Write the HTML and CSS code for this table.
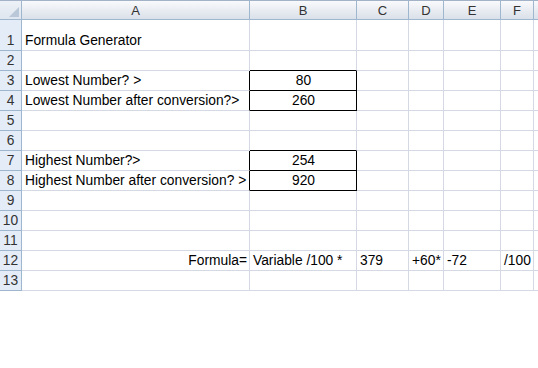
FILE: index.html
```html
<!DOCTYPE html>
<html lang="en">
<head>
<meta charset="utf-8">
<title>Formula Generator</title>
<link rel="stylesheet" href="styles.css">
</head>
<body>
<div class="sheet">
  <!-- column headings -->
  <div class="corner"><span class="corner-tri"></span></div>
  <div class="colhead">A</div>
  <div class="colhead">B</div>
  <div class="colhead">C</div>
  <div class="colhead">D</div>
  <div class="colhead">E</div>
  <div class="colhead">F</div>
  <div class="colhead blank"></div>

  <!-- row 1 -->
  <div class="rowhead">1</div>
  <div class="cell">Formula Generator</div>
  <div class="cell"></div><div class="cell"></div><div class="cell"></div><div class="cell"></div><div class="cell"></div><div class="cell"></div>

  <!-- row 2 -->
  <div class="rowhead">2</div>
  <div class="cell"></div>
  <div class="cell edge-b"></div>
  <div class="cell"></div><div class="cell"></div><div class="cell"></div><div class="cell"></div><div class="cell"></div>

  <!-- row 3 -->
  <div class="rowhead">3</div>
  <div class="cell edge-r">Lowest Number? &gt;</div>
  <div class="cell boxed">80</div>
  <div class="cell"></div><div class="cell"></div><div class="cell"></div><div class="cell"></div><div class="cell"></div>

  <!-- row 4 -->
  <div class="rowhead">4</div>
  <div class="cell edge-r">Lowest Number after conversion?&gt;</div>
  <div class="cell boxed">260</div>
  <div class="cell"></div><div class="cell"></div><div class="cell"></div><div class="cell"></div><div class="cell"></div>

  <!-- row 5 -->
  <div class="rowhead">5</div>
  <div class="cell"></div><div class="cell"></div><div class="cell"></div><div class="cell"></div><div class="cell"></div><div class="cell"></div><div class="cell"></div>

  <!-- row 6 -->
  <div class="rowhead">6</div>
  <div class="cell"></div>
  <div class="cell edge-b"></div>
  <div class="cell"></div><div class="cell"></div><div class="cell"></div><div class="cell"></div><div class="cell"></div>

  <!-- row 7 -->
  <div class="rowhead">7</div>
  <div class="cell edge-r">Highest Number?&gt;</div>
  <div class="cell boxed">254</div>
  <div class="cell"></div><div class="cell"></div><div class="cell"></div><div class="cell"></div><div class="cell"></div>

  <!-- row 8 -->
  <div class="rowhead">8</div>
  <div class="cell edge-r">Highest Number after conversion? &gt;</div>
  <div class="cell boxed">920</div>
  <div class="cell"></div><div class="cell"></div><div class="cell"></div><div class="cell"></div><div class="cell"></div>

  <!-- row 9 -->
  <div class="rowhead">9</div>
  <div class="cell"></div><div class="cell"></div><div class="cell"></div><div class="cell"></div><div class="cell"></div><div class="cell"></div><div class="cell"></div>

  <!-- row 10 -->
  <div class="rowhead">10</div>
  <div class="cell"></div><div class="cell"></div><div class="cell"></div><div class="cell"></div><div class="cell"></div><div class="cell"></div><div class="cell"></div>

  <!-- row 11 -->
  <div class="rowhead">11</div>
  <div class="cell"></div><div class="cell"></div><div class="cell"></div><div class="cell"></div><div class="cell"></div><div class="cell"></div><div class="cell"></div>

  <!-- row 12 -->
  <div class="rowhead">12</div>
  <div class="cell right">Formula=</div>
  <div class="cell">Variable /100 *</div>
  <div class="cell">379</div>
  <div class="cell">+60*</div>
  <div class="cell">-72</div>
  <div class="cell">/100</div>
  <div class="cell"></div>

  <!-- row 13 -->
  <div class="rowhead">13</div>
  <div class="cell"></div><div class="cell"></div><div class="cell"></div><div class="cell"></div><div class="cell"></div><div class="cell"></div><div class="cell"></div>
</div>
</body>
</html>
```

FILE: styles.css
```css
* {
  box-sizing: border-box;
}

html, body {
  margin: 0;
  padding: 0;
  background: #ffffff;
}

body {
  width: 538px;
  height: 368px;
  overflow: hidden;
  font-family: "Liberation Sans", Arial, sans-serif;
  font-size: 13.8px;
  color: #000000;
}

.sheet {
  display: grid;
  grid-template-columns: 22px 228px 107px 52px 35px 57px 33px 1fr;
  grid-template-rows: 20px 31px repeat(12, 20px);
}

/* headings */
.corner,
.colhead {
  background: linear-gradient(#f9fafc, #e6eaf0 60%, #dbe1ea);
  border-top: 1px solid #a3b2c6;
  border-right: 1px solid #9eb6ce;
  border-bottom: 1px solid #9eb6ce;
}

.corner {
  position: relative;
  background: linear-gradient(#edf1f7, #dfe6ef);
}

.corner-tri {
  position: absolute;
  right: 2px;
  bottom: 2px;
  width: 0;
  height: 0;
  border-left: 10px solid transparent;
  border-bottom: 10px solid #b9c7d8;
}

.colhead {
  display: flex;
  align-items: center;
  justify-content: center;
  color: #333333;
  font-size: 13px;
  padding-top: 1px;
}

.colhead.blank {
  border-right: none;
}

.rowhead {
  display: flex;
  align-items: flex-end;
  justify-content: center;
  padding-bottom: 2px;
  background: #e4ecf7;
  border-right: 1px solid #9eb6ce;
  border-bottom: 1px solid #9eb6ce;
  color: #333333;
}

/* worksheet cells */
.cell {
  display: flex;
  align-items: flex-end;
  padding: 0 2px 2px 3px;
  white-space: nowrap;
  overflow: visible;
  border-right: 1px solid #d4d9e3;
  border-bottom: 1px solid #d4d9e3;
}

.cell.right {
  justify-content: flex-end;
}

.cell.boxed {
  justify-content: center;
  border-right-color: #000000;
  border-bottom-color: #000000;
}

.cell.edge-r {
  border-right-color: #000000;
}

.cell.edge-b {
  border-bottom-color: #000000;
}
```
